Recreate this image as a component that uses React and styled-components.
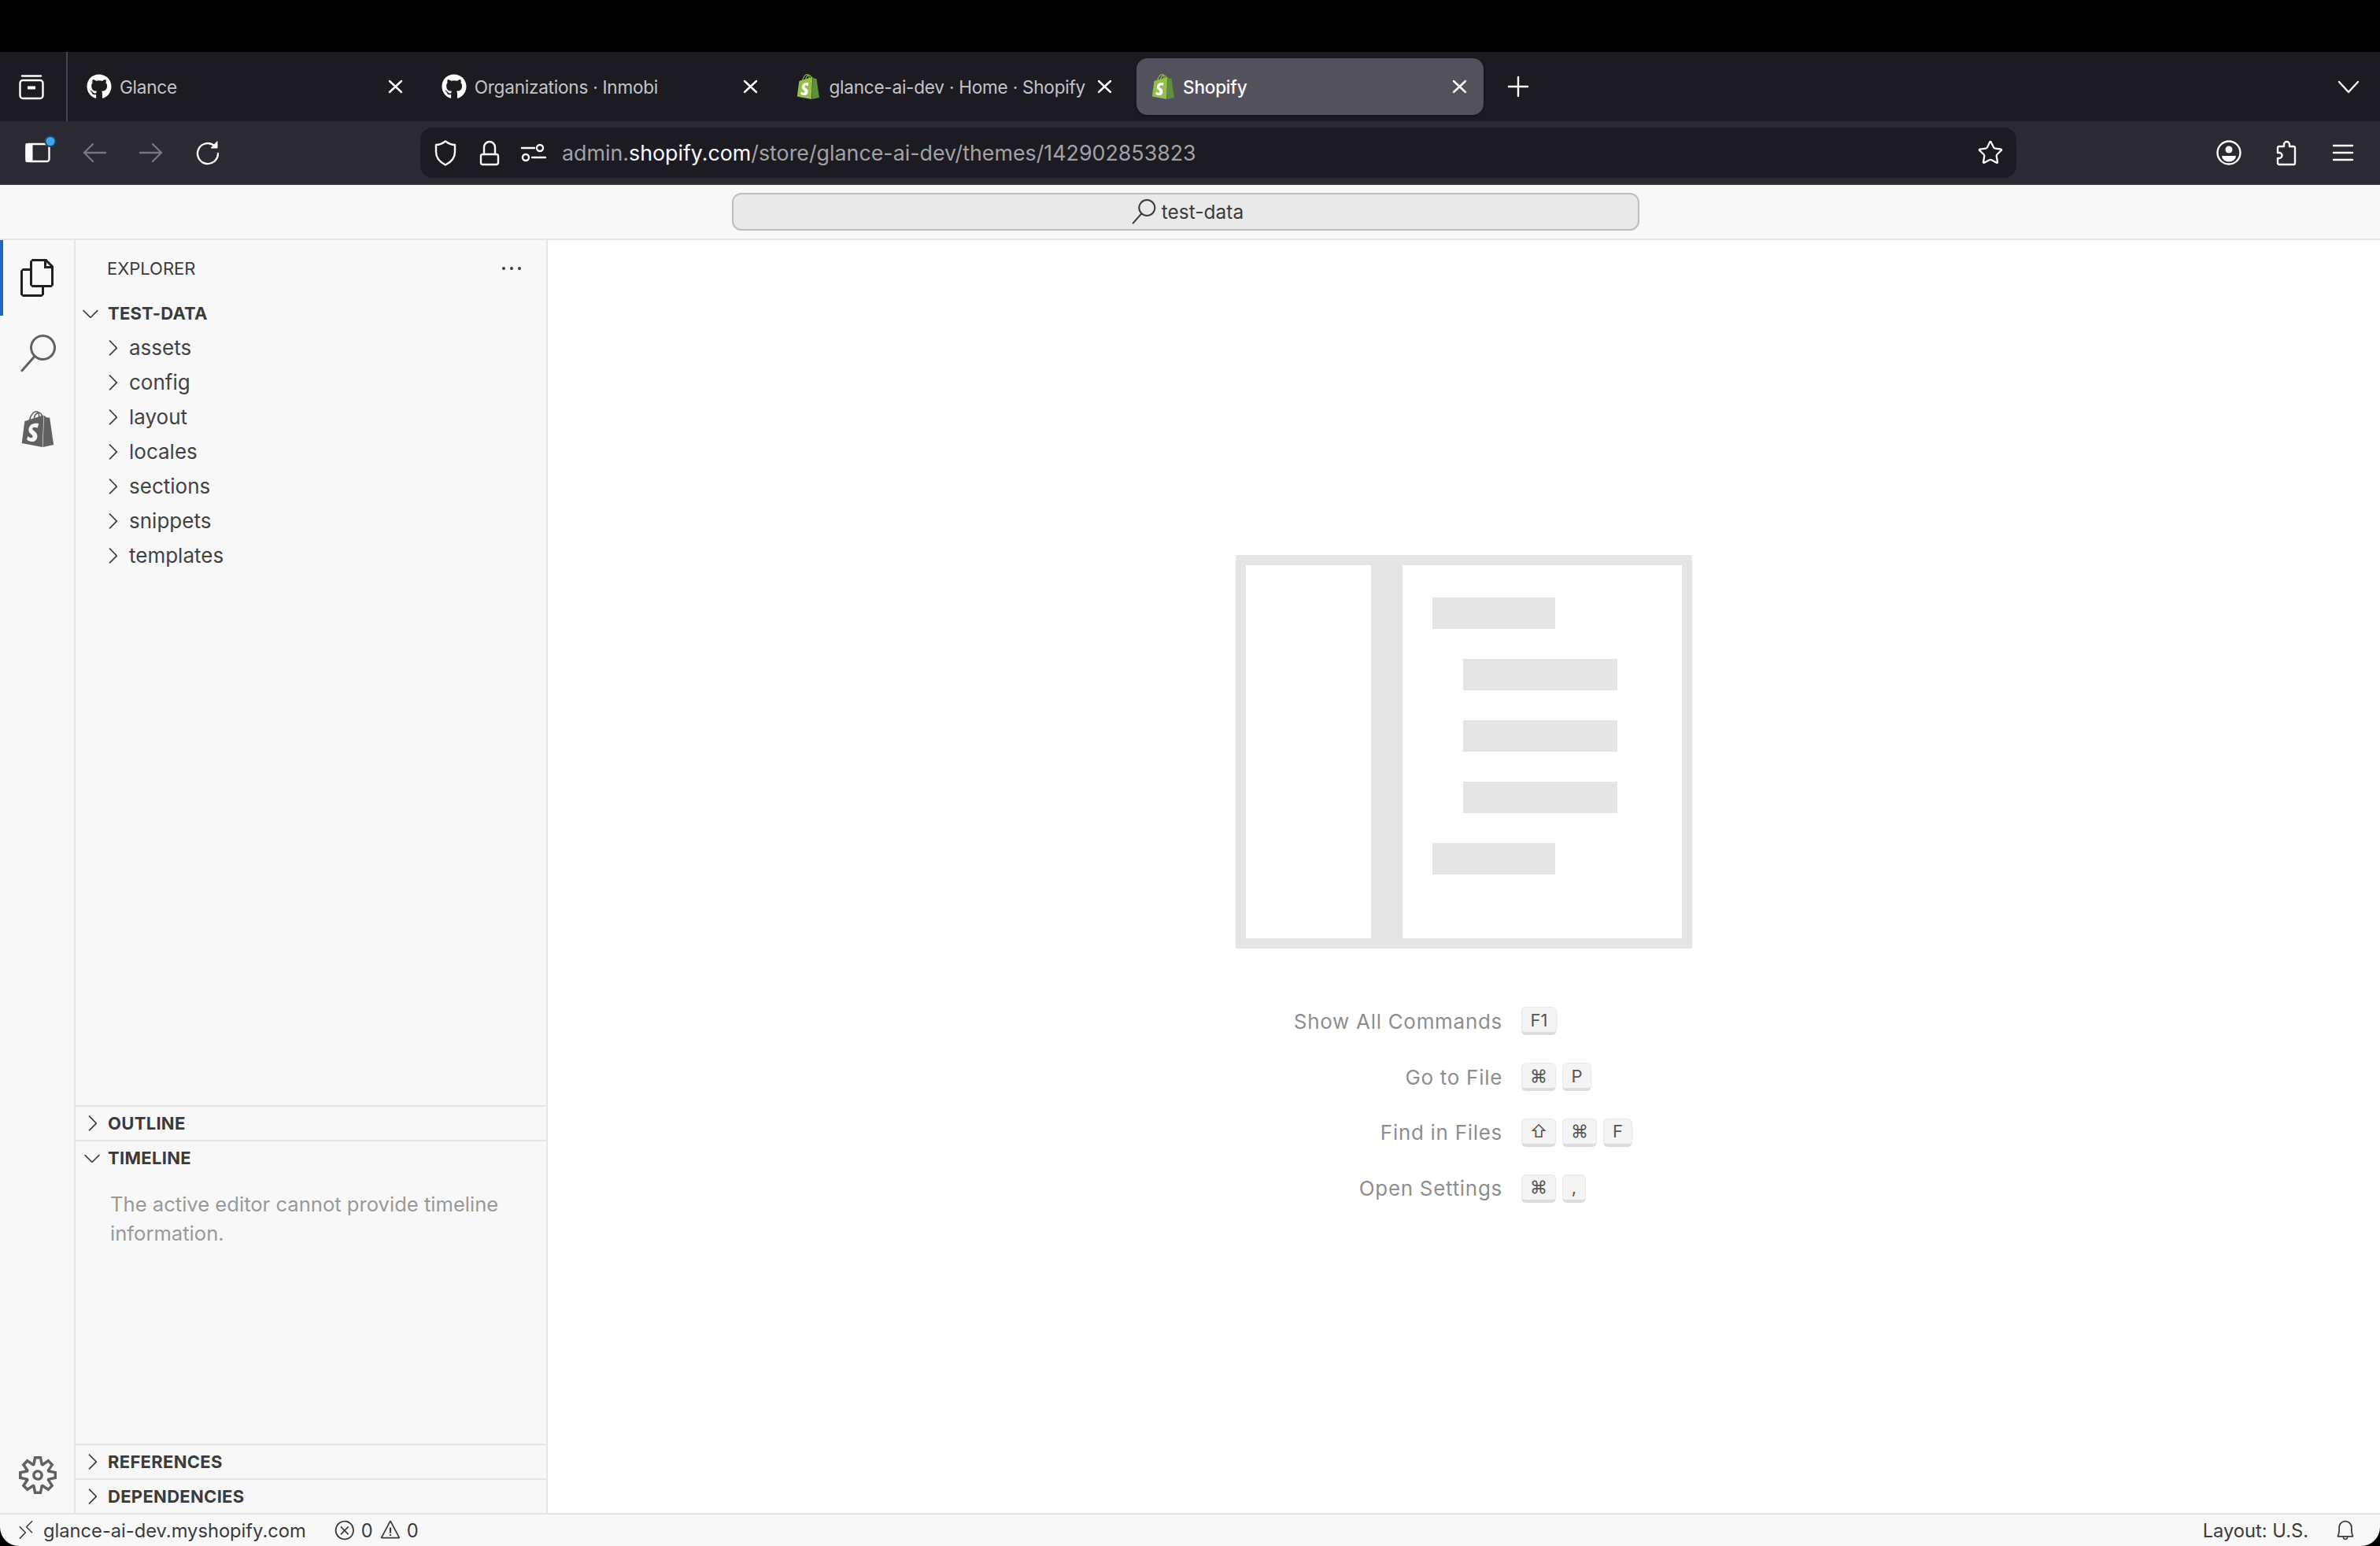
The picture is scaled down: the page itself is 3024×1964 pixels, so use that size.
import React from 'react';
import styled, { createGlobalStyle } from 'styled-components';
import { Star } from 'lucide-react';
import { FaGithub } from 'react-icons/fa';
import {
  VscBell,
  VscChevronDown,
  VscChevronRight,
  VscEllipsis,
  VscError,
  VscFiles,
  VscRemote,
  VscSearch,
  VscSettingsGear,
  VscWarning,
} from 'react-icons/vsc';

const GlobalStyle = createGlobalStyle`
  html, body {
    margin: 0;
    padding: 0;
    background: #000;
    font-family: Inter, "Liberation Sans", "DejaVu Sans", sans-serif;
  }
`;

const Screen = styled.div`
  display: flex;
  flex-direction: column;
  width: 100vw;
  height: 100vh;
  background: #000;
  overflow: hidden;
`;

const MenuGap = styled.div`
  flex: none;
  height: 66px;
`;

const TabStrip = styled.div`
  flex: none;
  display: flex;
  align-items: center;
  height: 88px;
  padding-right: 24px;
  background: #1c1b22;
`;

const ViewButton = styled.div`
  display: flex;
  align-items: center;
  align-self: stretch;
  box-sizing: border-box;
  width: 86px;
  padding-left: 24px;
  border-right: 2px solid #47464d;
  color: #fff;
`;

const Tabs = styled.div`
  display: flex;
  gap: 9.7px;
  margin-left: 6px;
`;

const Tab = styled.div`
  display: flex;
  align-items: center;
  box-sizing: border-box;
  width: 441px;
  height: 72px;
  padding: 0 14px 0 18px;
  border-radius: 14px;
  font-size: 22.6px;
  letter-spacing: -0.25px;
  color: ${p => (p.$active ? '#fbfbfe' : '#c4c4c8')};
  font-weight: ${p => (p.$active ? 500 : 400)};
  background: ${p => (p.$active ? '#53525c' : 'transparent')};
  box-shadow: ${p => (p.$active ? '0 1px 4px rgba(0, 0, 0, .4)' : 'none')};
`;

const TabTitle = styled.span`
  flex: 1;
  margin-left: ${p => (p.$active ? 9 : 10)}px;
  white-space: nowrap;
`;

const TabClose = styled.span`
  display: flex;
  color: #fff;
`;

const NewTab = styled.span`
  display: flex;
  margin-left: 28px;
  color: #fff;
`;

const TabListButton = styled.span`
  display: flex;
  margin-left: auto;
  color: #fff;
`;

const NavBar = styled.div`
  flex: none;
  display: flex;
  align-items: center;
  box-sizing: border-box;
  height: 81px;
  padding: 0 0 1px 31px;
  border-bottom: 1px solid #45444c;
  background: #2b2a33;
  color: #fbfbfe;
`;

const NavButton = styled.span`
  display: flex;
  margin-left: ${p => p.$gap || 40}px;
  color: ${p => (p.$dim ? '#77767c' : '#fbfbfe')};
`;

const UrlBar = styled.div`
  display: flex;
  align-items: center;
  box-sizing: border-box;
  width: 2028px;
  height: 64px;
  margin-left: 254px;
  padding: 0 16px 0 16px;
  border-radius: 16px;
  background: #1c1b22;
`;

const UrlIcon = styled.span`
  display: flex;
  margin-left: ${p => p.$gap || 0}px;
  color: #fbfbfe;
`;

const UrlText = styled.span`
  margin-left: 20px;
  font-size: 26.8px;
  color: #a2a2a6;
  white-space: nowrap;
`;

const UrlHost = styled.span`
  color: #fbfbfe;
`;

const BookmarkButton = styled.span`
  display: flex;
  margin-left: auto;
  color: #fbfbfe;
`;

const TitleBar = styled.div`
  flex: none;
  display: flex;
  align-items: center;
  box-sizing: border-box;
  height: 70px;
  border-bottom: 2px solid #e5e5e5;
  background: #f8f8f8;
`;

const CommandCenter = styled.div`
  display: flex;
  align-items: center;
  justify-content: center;
  gap: 7px;
  box-sizing: border-box;
  width: 1153px;
  height: 48px;
  margin-left: 930px;
  padding-left: 4px;
  border: 2px solid #bdbdbd;
  border-radius: 12px;
  background: #e9e9e9;
  font-size: 24.5px;
  color: #3b3b3b;
`;

const Workbench = styled.div`
  flex: 1;
  display: flex;
  min-height: 0;
`;

const ActivityBar = styled.div`
  flex: none;
  display: flex;
  flex-direction: column;
  box-sizing: border-box;
  width: 96px;
  border-right: 2px solid #e5e5e5;
  background: #f8f8f8;
`;

const ActivityItem = styled.div`
  display: flex;
  align-items: center;
  justify-content: center;
  height: 96px;
  padding-left: 2px;
  margin-top: ${p => (p.$bottom ? 'auto' : 0)};
  color: ${p => (p.$active ? '#1f1f1f' : '#616161')};
  box-shadow: ${p => (p.$active ? 'inset 4px 0 0 #2563c4' : 'none')};
`;

const SideBar = styled.div`
  flex: none;
  display: flex;
  flex-direction: column;
  box-sizing: border-box;
  width: 600px;
  border-right: 2px solid #e5e5e5;
  background: #f8f8f8;
  color: #3b3b3b;
`;

const SideHead = styled.div`
  flex: none;
  display: flex;
  align-items: center;
  justify-content: space-between;
  height: 71px;
  padding: 0 28px 0 40px;
  font-size: 22px;
`;

const Tree = styled.div`
  flex: 1;
  min-height: 0;
`;

const TreeRow = styled.div`
  display: flex;
  align-items: center;
  height: 44px;
  padding-left: ${p => (p.$root ? 3 : 31)}px;
  color: #424242;
`;

const RowLabel = styled.span`
  margin-left: ${p => (p.$root ? 6 : 5)}px;
  margin-bottom: ${p => (p.$root ? 0 : 2)}px;
  font-size: ${p => (p.$root ? 22 : 26)}px;
  font-weight: ${p => (p.$root ? 700 : 400)};
  letter-spacing: ${p => (p.$root ? '0.2px' : '0')};
  color: ${p => (p.$root ? '#3b3b3b' : '#424242')};
`;

const PaneHeader = styled.div`
  flex: none;
  display: flex;
  align-items: center;
  box-sizing: border-box;
  height: 44px;
  padding-left: 5px;
  border-top: 2px solid #e5e5e5;
  color: #424242;
`;

const PaneTitle = styled.span`
  margin-left: 4px;
  font-size: 22px;
  font-weight: 700;
  letter-spacing: 0.3px;
  color: #3b3b3b;
`;

const TimelineBody = styled.div`
  flex: none;
  box-sizing: border-box;
  height: 342px;
  padding: 19px 0 0 44px;
  width: 570px;
  font-size: 25.6px;
  line-height: 37px;
  color: #999;
`;

const Editor = styled.div`
  flex: 1;
  display: flex;
  flex-direction: column;
  align-items: center;
  justify-content: center;
  padding-top: 23px;
  background: #fff;
`;

const Letterpress = styled.svg`
  display: block;
  width: 580px;
  height: 500px;
  margin-bottom: 57px;
`;

const Shortcuts = styled.div`
  width: 580px;
`;

const ShortcutRow = styled.div`
  display: flex;
  align-items: center;
  gap: 24px;
  height: 70.8px;
`;

const ShortcutLabel = styled.span`
  width: 339px;
  text-align: right;
  font-size: 26px;
  letter-spacing: 0.7px;
  color: #8e8e8e;
`;

const Keys = styled.span`
  display: flex;
  gap: 8px;
`;

const Key = styled.span`
  display: flex;
  align-items: center;
  justify-content: center;
  box-sizing: border-box;
  width: ${p => p.$w}px;
  height: 36px;
  border: 1px solid #e8e8e8;
  border-bottom: 4px solid #dcdcdc;
  border-radius: 6px;
  background: #f4f4f4;
  font-size: 22px;
  font-family: Inter, "DejaVu Sans", sans-serif;
  color: #555;
`;

const StatusBar = styled.div`
  flex: none;
  display: flex;
  align-items: center;
  box-sizing: border-box;
  height: 42px;
  padding: 0 30px 0 19px;
  border-top: 2px solid #e5e5e5;
  border-radius: 0 0 24px 24px;
  background: #f8f8f8;
  font-size: 23.7px;
  color: #3b3b3b;
`;

const StatusIcon = styled.span`
  display: flex;
  margin-left: ${p => p.$gap || 0}px;
`;

const StatusText = styled.span`
  margin-left: ${p => p.$gap || 0}px;
  white-space: nowrap;
`;

const StatusRight = styled.span`
  display: flex;
  align-items: center;
  gap: 33px;
  margin-left: auto;
`;

const ChromeSvg = ({ children, size = 32, fill = 'none', width = 2.4 }) => (
  <svg
    width={size}
    height={size}
    viewBox="0 0 32 32"
    fill={fill}
    stroke="currentColor"
    strokeWidth={width}
    strokeLinecap="round"
    strokeLinejoin="round"
    style={{ overflow: 'visible' }}
  >
    {children}
  </svg>
);

const ViewIcon = () => (
  <ChromeSvg>
    <path d="M4 2.5h24" />
    <rect x="1.5" y="8" width="29" height="23" rx="3.5" />
    <rect x="11" y="15.5" width="10" height="4" fill="currentColor" stroke="none" />
  </ChromeSvg>
);

const SidebarIcon = () => (
  <ChromeSvg>
    <rect x="1.5" y="5" width="29" height="22" rx="3" />
    <rect x="1.5" y="5" width="7" height="22" fill="currentColor" strokeWidth="2" />
    <circle cx="32" cy="1.5" r="6.5" fill="#3fa6ee" stroke="#23425c" strokeWidth="2" />
  </ChromeSvg>
);

const BackIcon = () => (
  <ChromeSvg>
    <path d="M3 16h27M14 5 3 16l11 11" />
  </ChromeSvg>
);

const ForwardIcon = () => (
  <ChromeSvg>
    <path d="M2 16h27M18 5l11 11-11 11" />
  </ChromeSvg>
);

const ReloadIcon = () => (
  <ChromeSvg>
    <path d="M29 17a13 13 0 1 1-5-10.2" />
    <path d="M28 2v8h-7.5z" fill="currentColor" strokeWidth="1" />
  </ChromeSvg>
);

const ShieldIcon = () => (
  <ChromeSvg>
    <path d="M16 1.5c4 3 8 4.5 12 4.5v9c0 8-5 13-12 16.5C9 28 4 23 4 15V6c4 0 8-1.5 12-4.5z" />
  </ChromeSvg>
);

const LockIcon = () => (
  <ChromeSvg>
    <rect x="5" y="18" width="22" height="13" rx="2.5" />
    <path d="M9 18V9a7 7 0 0 1 14 0v9" />
  </ChromeSvg>
);

const PermissionsIcon = () => (
  <ChromeSvg>
    <path d="M1 10h16M14 22h17" />
    <circle cx="24" cy="10" r="4" />
    <circle cx="6" cy="22" r="4" />
  </ChromeSvg>
);

const AccountIcon = () => (
  <ChromeSvg>
    <circle cx="16" cy="16" r="14.5" />
    <circle cx="16" cy="12" r="4.5" fill="currentColor" stroke="none" />
    <path d="M7 20h18a9 7.5 0 0 1-18 0z" fill="currentColor" stroke="none" />
  </ChromeSvg>
);

const ExtensionIcon = () => (
  <ChromeSvg>
    <path d="M13 8V5.5a3.5 3.5 0 0 1 7 0V8h5a2 2 0 0 1 2 2v19a2 2 0 0 1-2 2H7a2 2 0 0 1-2-2v-6h2a3.5 3.5 0 0 0 0-7H5v-6a2 2 0 0 1 2-2z" />
  </ChromeSvg>
);

const MenuIcon = () => (
  <ChromeSvg>
    <path d="M4 7h24M4 16h24M4 25h24" />
  </ChromeSvg>
);

const CloseIcon = () => (
  <ChromeSvg>
    <path d="M8 9l15 14M23 9 8 23" />
  </ChromeSvg>
);

const PlusIcon = () => (
  <ChromeSvg>
    <path d="M16 4v24M4 16h24" />
  </ChromeSvg>
);

const TabListIcon = () => (
  <ChromeSvg>
    <path d="M4 10l12 13 12-13" />
  </ChromeSvg>
);

const ShopifyBag = ({ size = 32, body = '#95bf47', strip = '#5e8e3e', letter }) => (
  <svg width={size} height={size} viewBox="0 0 24 24">
    {letter && <rect x="4.5" y="8" width="8" height="13.5" fill={letter} />}
    <path
      fill={strip}
      d="M15.337 23.979l7.216-1.561s-2.604-17.613-2.625-17.73c-.018-.116-.114-.192-.211-.192s-1.929-.136-1.929-.136-1.275-1.274-1.439-1.411c-.045-.037-.075-.057-.121-.074l-.914 21.104h.023z"
    />
    <path
      fill={body}
      d="M11.71 11.305s-.81-.424-1.774-.424c-1.447 0-1.504.906-1.504 1.141 0 1.232 3.24 1.715 3.24 4.629 0 2.295-1.44 3.76-3.406 3.76-2.354 0-3.54-1.465-3.54-1.465l.646-2.086s1.245 1.066 2.28 1.066c.675 0 .975-.545.975-.932 0-1.619-2.654-1.694-2.654-4.359-.034-2.237 1.571-4.416 4.827-4.416 1.257 0 1.875.361 1.875.361l-.945 2.715-.02.01zM11.17.83c.136 0 .271.038.405.135-.984.465-2.064 1.639-2.508 3.992-.656.213-1.293.405-1.889.578C7.697 3.75 8.951.84 11.17.84V.83zm1.235 2.949v.135c-.754.232-1.583.484-2.394.736.466-1.777 1.333-2.645 2.085-2.971.193.501.309 1.176.309 2.1zm.539-2.234c.694.074 1.141.867 1.429 1.755-.349.114-.735.231-1.158.366v-.252c0-.752-.096-1.371-.271-1.871v.002zm2.992 1.289c-.02 0-.06.021-.078.021s-.289.075-.714.21c-.423-1.233-1.176-2.37-2.508-2.37h-.115C12.135.209 11.669 0 11.265 0 8.159 0 6.675 3.877 6.21 5.846c-1.194.365-2.063.636-2.16.674-.675.213-.694.232-.772.87-.075.462-1.83 14.063-1.83 14.063L15.009 24l.927-21.166z"
    />
  </svg>
);

const tabs = [
  { title: 'Glance', icon: 'github' },
  { title: 'Organizations · Inmobi', icon: 'github' },
  { title: 'glance-ai-dev · Home · Shopify', icon: 'shopify' },
  { title: 'Shopify', icon: 'shopify', active: true },
];

const folders = ['assets', 'config', 'layout', 'locales', 'sections', 'snippets', 'templates'];

const shortcuts = [
  { label: 'Show All Commands', keys: [['F1', 45]] },
  { label: 'Go to File', keys: [['⌘', 44], ['P', 37]] },
  { label: 'Find in Files', keys: [['⇧', 44], ['⌘', 44], ['F', 37]] },
  { label: 'Open Settings', keys: [['⌘', 44], [',', 30]] },
];

const App = () => (
  <Screen>
    <GlobalStyle />
    <MenuGap />
    <TabStrip>
      <ViewButton>
        <ViewIcon />
      </ViewButton>
      <Tabs>
        {tabs.map(tab => (
          <Tab key={tab.title} $active={tab.active}>
            {tab.icon === 'github' ? (
              <FaGithub size={32} color="#fff" />
            ) : (
              <ShopifyBag letter="#fff" />
            )}
            <TabTitle $active={tab.active}>{tab.title}</TabTitle>
            <TabClose>
              <CloseIcon />
            </TabClose>
          </Tab>
        ))}
      </Tabs>
      <NewTab>
        <PlusIcon />
      </NewTab>
      <TabListButton>
        <TabListIcon />
      </TabListButton>
    </TabStrip>
    <NavBar>
      <NavButton $gap={1}>
        <SidebarIcon />
      </NavButton>
      <NavButton $dim>
        <BackIcon />
      </NavButton>
      <NavButton $dim>
        <ForwardIcon />
      </NavButton>
      <NavButton>
        <ReloadIcon />
      </NavButton>
      <UrlBar>
        <UrlIcon>
          <ShieldIcon />
        </UrlIcon>
        <UrlIcon $gap={24}>
          <LockIcon />
        </UrlIcon>
        <UrlIcon $gap={24}>
          <PermissionsIcon />
        </UrlIcon>
        <UrlText>
          admin.<UrlHost>shopify.com</UrlHost>/store/glance-ai-dev/themes/142902853823
        </UrlText>
        <BookmarkButton>
          <Star size={34} strokeWidth={1.6} />
        </BookmarkButton>
      </UrlBar>
      <NavButton $gap={254}>
        <AccountIcon />
      </NavButton>
      <NavButton $gap={41}>
        <ExtensionIcon />
      </NavButton>
      <NavButton>
        <MenuIcon />
      </NavButton>
    </NavBar>
    <TitleBar>
      <CommandCenter>
        <VscSearch size={32} />
        test-data
      </CommandCenter>
    </TitleBar>
    <Workbench>
      <ActivityBar>
        <ActivityItem $active>
          <VscFiles size={48} />
        </ActivityItem>
        <ActivityItem>
          <VscSearch size={48} />
        </ActivityItem>
        <ActivityItem>
          <ShopifyBag size={46} body="#616161" strip="#616161" />
        </ActivityItem>
        <ActivityItem $bottom>
          <VscSettingsGear size={48} />
        </ActivityItem>
      </ActivityBar>
      <SideBar>
        <SideHead>
          EXPLORER
          <VscEllipsis size={32} />
        </SideHead>
        <Tree>
          <TreeRow $root>
            <VscChevronDown size={32} />
            <RowLabel $root>TEST-DATA</RowLabel>
          </TreeRow>
          {folders.map(name => (
            <TreeRow key={name}>
              <VscChevronRight size={32} />
              <RowLabel>{name}</RowLabel>
            </TreeRow>
          ))}
        </Tree>
        <PaneHeader>
          <VscChevronRight size={32} />
          <PaneTitle>OUTLINE</PaneTitle>
        </PaneHeader>
        <PaneHeader>
          <VscChevronDown size={32} />
          <PaneTitle>TIMELINE</PaneTitle>
        </PaneHeader>
        <TimelineBody>The active editor cannot provide timeline information.</TimelineBody>
        <PaneHeader>
          <VscChevronRight size={32} />
          <PaneTitle>REFERENCES</PaneTitle>
        </PaneHeader>
        <PaneHeader>
          <VscChevronRight size={32} />
          <PaneTitle>DEPENDENCIES</PaneTitle>
        </PaneHeader>
      </SideBar>
      <Editor>
        <Letterpress viewBox="0 0 580 500" fill="#e5e5e5">
          <path
            fillRule="evenodd"
            d="M0 0h580v500H0zM13 13v474h159V13zM212 13v474h355V13z"
          />
          <rect x="250" y="54" width="156" height="40" />
          <rect x="289" y="132" width="196" height="40" />
          <rect x="289" y="210" width="196" height="40" />
          <rect x="289" y="288" width="196" height="40" />
          <rect x="250" y="366" width="156" height="40" />
        </Letterpress>
        <Shortcuts>
          {shortcuts.map(item => (
            <ShortcutRow key={item.label}>
              <ShortcutLabel>{item.label}</ShortcutLabel>
              <Keys>
                {item.keys.map(([glyph, width]) => (
                  <Key key={glyph} $w={width}>
                    {glyph}
                  </Key>
                ))}
              </Keys>
            </ShortcutRow>
          ))}
        </Shortcuts>
      </Editor>
    </Workbench>
    <StatusBar>
      <StatusIcon>
        <VscRemote size={28} />
      </StatusIcon>
      <StatusText $gap={8}>glance-ai-dev.myshopify.com</StatusText>
      <StatusIcon $gap={35}>
        <VscError size={28} />
      </StatusIcon>
      <StatusText $gap={7}>0</StatusText>
      <StatusIcon $gap={8}>
        <VscWarning size={28} />
      </StatusIcon>
      <StatusText $gap={7}>0</StatusText>
      <StatusRight>
        Layout: U.S.
        <VscBell size={28} />
      </StatusRight>
    </StatusBar>
  </Screen>
);

export default App;
